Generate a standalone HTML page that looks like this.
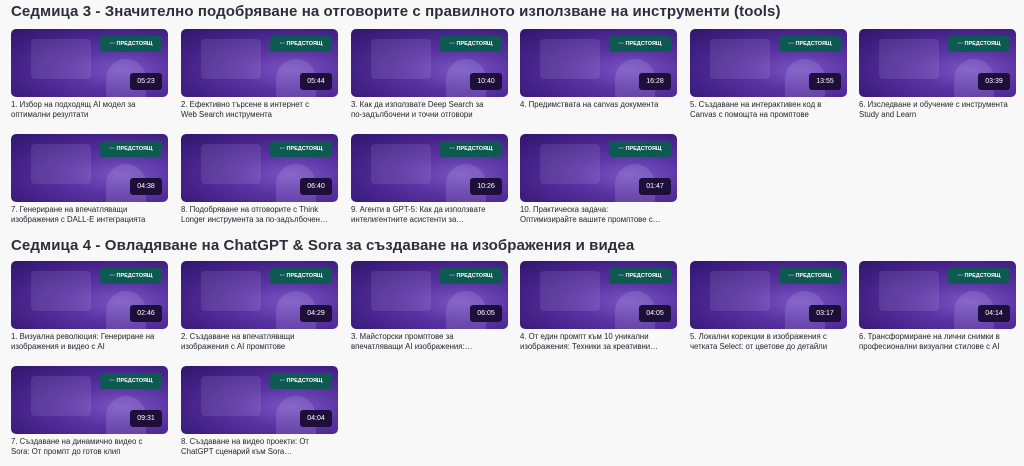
<!DOCTYPE html>
<html><head><meta charset="utf-8"><style>
body{margin:0;width:1024px;height:466px;background:#f8f8f9;font-family:"Liberation Sans","DejaVu Sans",sans-serif;position:relative;overflow:hidden}
h2{position:absolute;left:11px;margin:0;font-size:15px;font-weight:bold;color:#2e2e3a;white-space:nowrap;letter-spacing:0.1px}
.c{position:absolute;width:157px;height:68px;border-radius:5px;overflow:hidden;background:radial-gradient(ellipse at 70% 60%,#7a55c2 0%,#5a33a3 35%,#3f1f82 75%,#2f1668 100%)}
.c:before{content:"";position:absolute;left:20px;top:10px;width:60px;height:40px;border-radius:4px;background:rgba(255,255,255,.09)}
.c:after{content:"";position:absolute;left:95px;top:30px;width:40px;height:45px;border-radius:20px 20px 0 0;background:rgba(200,190,240,.18)}
.b{position:absolute;right:6px;top:7px;width:62px;height:16px;border-radius:3px;background:#0e5a52;color:#fff;font-size:5.5px;font-weight:bold;line-height:16px;text-align:center;z-index:2}
.t{position:absolute;right:6px;top:44px;width:32px;height:17px;border-radius:3px;background:#1e0f3a;color:#fff;font-size:7px;line-height:17px;text-align:center;z-index:2}
.p{position:absolute;width:150px;font-size:7.8px;line-height:10px;color:#24242e;display:-webkit-box;-webkit-line-clamp:2;-webkit-box-orient:vertical;overflow:hidden;max-height:20px}
</style></head><body>
<h2 style="top:3px">Седмица 3 - Значително подобряване на отговорите с правилното използване на инструменти (tools)</h2>
<h2 style="top:237px">Седмица 4 - Овладяване на ChatGPT &amp; Sora за създаване на изображения и видеа</h2>

<div class="c" style="left:11px;top:29px"><div class="b">··· ПРЕДСТОЯЩ</div><div class="t">05:23</div></div>
<div class="p" style="left:11px;top:100px;width:145px">1. Избор на подходящ AI модел за оптимални резултати</div>
<div class="c" style="left:181px;top:29px"><div class="b">··· ПРЕДСТОЯЩ</div><div class="t">05:44</div></div>
<div class="p" style="left:181px;top:100px;width:145px">2. Ефективно търсене в интернет с Web Search инструмента</div>
<div class="c" style="left:351px;top:29px"><div class="b">··· ПРЕДСТОЯЩ</div><div class="t">10:40</div></div>
<div class="p" style="left:351px;top:100px;width:145px">3. Как да използвате Deep Search за по-задълбочени и точни отговори</div>
<div class="c" style="left:520px;top:29px"><div class="b">··· ПРЕДСТОЯЩ</div><div class="t">16:28</div></div>
<div class="p" style="left:520px;top:100px;width:160px">4. Предимствата на canvas документа</div>
<div class="c" style="left:690px;top:29px"><div class="b">··· ПРЕДСТОЯЩ</div><div class="t">13:55</div></div>
<div class="p" style="left:690px;top:100px;width:145px">5. Създаване на интерактивен код в Canvas с помощта на промптове</div>
<div class="c" style="left:859px;top:29px"><div class="b">··· ПРЕДСТОЯЩ</div><div class="t">03:39</div></div>
<div class="p" style="left:859px;top:100px;width:160px">6. Изследване и обучение с инструмента Study and Learn</div>

<div class="c" style="left:11px;top:134px"><div class="b">··· ПРЕДСТОЯЩ</div><div class="t">04:38</div></div>
<div class="p" style="left:11px;top:205px;width:145px">7. Генериране на впечатляващи изображения с DALL-E интеграцията</div>
<div class="c" style="left:181px;top:134px"><div class="b">··· ПРЕДСТОЯЩ</div><div class="t">06:40</div></div>
<div class="p" style="left:181px;top:205px">8. Подобряване на отговорите с Think Longer инструмента за по-задълбочен…</div>
<div class="c" style="left:351px;top:134px"><div class="b">··· ПРЕДСТОЯЩ</div><div class="t">10:26</div></div>
<div class="p" style="left:351px;top:205px">9. Агенти в GPT-5: Как да използвате интелигентните асистенти за…</div>
<div class="c" style="left:520px;top:134px"><div class="b">··· ПРЕДСТОЯЩ</div><div class="t">01:47</div></div>
<div class="p" style="left:520px;top:205px;width:145px">10. Практическа задача: Оптимизирайте вашите промптове с…</div>

<div class="c" style="left:11px;top:261px"><div class="b">··· ПРЕДСТОЯЩ</div><div class="t">02:46</div></div>
<div class="p" style="left:11px;top:332px">1. Визуална революция: Генериране на изображения и видео с AI</div>
<div class="c" style="left:181px;top:261px"><div class="b">··· ПРЕДСТОЯЩ</div><div class="t">04:29</div></div>
<div class="p" style="left:181px;top:332px;width:145px">2. Създаване на впечатляващи изображения с AI промптове</div>
<div class="c" style="left:351px;top:261px"><div class="b">··· ПРЕДСТОЯЩ</div><div class="t">06:05</div></div>
<div class="p" style="left:351px;top:332px;width:145px">3. Майсторски промптове за впечатляващи AI изображения:…</div>
<div class="c" style="left:520px;top:261px"><div class="b">··· ПРЕДСТОЯЩ</div><div class="t">04:05</div></div>
<div class="p" style="left:520px;top:332px">4. От един промпт към 10 уникални изображения: Техники за креативни…</div>
<div class="c" style="left:690px;top:261px"><div class="b">··· ПРЕДСТОЯЩ</div><div class="t">03:17</div></div>
<div class="p" style="left:690px;top:332px">5. Локални корекции в изображения с четката Select: от цветове до детайли</div>
<div class="c" style="left:859px;top:261px"><div class="b">··· ПРЕДСТОЯЩ</div><div class="t">04:14</div></div>
<div class="p" style="left:859px;top:332px;width:160px">6. Трансформиране на лични снимки в професионални визуални стилове с AI</div>

<div class="c" style="left:11px;top:366px"><div class="b">··· ПРЕДСТОЯЩ</div><div class="t">09:31</div></div>
<div class="p" style="left:11px;top:437px">7. Създаване на динамично видео с Sora: От промпт до готов клип</div>
<div class="c" style="left:181px;top:366px"><div class="b">··· ПРЕДСТОЯЩ</div><div class="t">04:04</div></div>
<div class="p" style="left:181px;top:437px">8. Създаване на видео проекти: От ChatGPT сценарий към Sora визуализация</div>
</body></html>
